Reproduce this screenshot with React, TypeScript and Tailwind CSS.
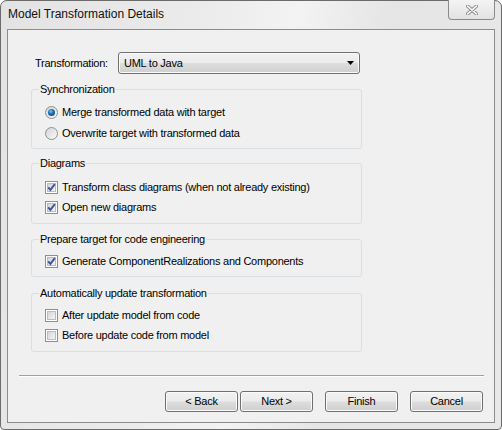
const btn =
  "flex h-[21px] w-[73px] items-center justify-center rounded-[3px] border border-[#707070] bg-[linear-gradient(#f2f2f2_0%,#ebebeb_48%,#dddddd_52%,#cfcfcf_100%)] shadow-[inset_0_0_0_1px_#fbfbfb]";

const Radio = ({ checked, label, rowClass }: { checked?: boolean; label: string; rowClass: string }) => (
  <div className={`flex items-center ${rowClass}`}>
    <span className="flex h-[13px] w-[13px] items-center justify-center rounded-full border border-[#8e8f8f] bg-[linear-gradient(135deg,#d4d4d4,#f9f9f9)]">
      {checked && (
        <span className="h-[7px] w-[7px] rounded-full bg-[radial-gradient(circle_at_40%_35%,#7cc8f5_0%,#1c6fb8_40%,#0b3577_100%)]" />
      )}
    </span>
    <span className="ml-[4px]">{label}</span>
  </div>
);

const Check = ({ checked, label }: { checked?: boolean; label: string }) => (
  <div className="flex h-[20px] items-center">
    <svg width="13" height="13" viewBox="0 0 13 13">
      <defs>
        <linearGradient id="cbfill" x1="0" y1="0" x2="1" y2="1">
          <stop offset="0" stopColor="#cfd2d6" />
          <stop offset="1" stopColor="#f7f7f7" />
        </linearGradient>
      </defs>
      <rect x="0.5" y="0.5" width="12" height="12" fill="#ffffff" stroke="#8e8f8f" />
      <rect x="2.5" y="2.5" width="8" height="8" fill="url(#cbfill)" stroke="#b9bcc0" />
      {checked && (
        <path d="M3.2 6.4 L5.4 8.9 L9.8 3.2" fill="none" stroke="#40559a" strokeWidth="1.9" />
      )}
    </svg>
    <span className="ml-[4px]">{label}</span>
  </div>
);

const Group = ({ title, className, children }: { title: string; className: string; children: React.ReactNode }) => (
  <fieldset className={`w-[331px] rounded-[3px] border border-[#d5dfe5] pl-[7px] ${className}`}>
    <legend className="px-[1px] leading-[13px]">{title}</legend>
    <div className="pl-[6px]">{children}</div>
  </fieldset>
);

export default function App() {
  return (
    <div className="flex h-[430px] w-[502px] flex-col rounded-t-[7px] rounded-b-[4px] border border-[#6b6b6b] bg-[linear-gradient(100deg,#e3e3e3_0%,#ebebeb_35%,#f3f3f3_52%,#e5e5e5_68%,#e8e8e8_100%)] px-[6px] pb-[6px] font-['Liberation_Sans',Arial,sans-serif] text-[11px] tracking-[-0.25px] text-black">
      <div className="flex h-[28px] items-start justify-between">
        <span className="mt-[6px] pl-px text-[12px] leading-[14px] tracking-normal text-[#111]">Model Transformation Details</span>
        <div className="-mt-px flex h-[20px] w-[47px] items-center justify-center rounded-b-[4px] border border-t-0 border-[#8a8a8a] bg-[linear-gradient(#f4f4f4,#e2e2e2)]">
          <svg width="12" height="10" viewBox="0 0 12 10">
            <path d="M1.5 1 L10.5 9 M10.5 1 L1.5 9" stroke="#8a8a8a" strokeWidth="3.4" strokeLinecap="round" />
            <path d="M1.5 1 L10.5 9 M10.5 1 L1.5 9" stroke="#ffffff" strokeWidth="1.6" strokeLinecap="round" />
          </svg>
        </div>
      </div>

      <div className="flex flex-1 flex-col border border-[#8c8c8c] bg-[#f0f0f0]">
        <div className="flex items-center pl-[27px] pt-[22px]">
          <span className="w-[83px]">Transformation:</span>
          <div className="flex h-[22px] w-[242px] items-center justify-between rounded-[3px] border border-[#707070] bg-[linear-gradient(#f2f2f2_0%,#ebebeb_48%,#dddddd_52%,#cfcfcf_100%)] pl-[5px] pr-[5px] shadow-[inset_0_0_0_1px_#fbfbfb]">
            <span>UML to Java</span>
            <svg width="7" height="4" viewBox="0 0 7 4">
              <path d="M0 0 H7 L3.5 4 Z" fill="#000" />
            </svg>
          </div>
        </div>

        <div className="pl-[23px]">
          <Group title="Synchronization" className="mt-[9px] pb-[4px] pt-[6px]">
            <Radio checked label="Merge transformed data with target" rowClass="h-[21px]" />
            <Radio label="Overwrite target with transformed data" rowClass="h-[21px]" />
          </Group>
          <Group title="Diagrams" className="mt-[8px] pb-[6px] pt-[7px]">
            <Check checked label="Transform class diagrams (when not already existing)" />
            <Check checked label="Open new diagrams" />
          </Group>
          <Group title="Prepare target for code engineering" className="mt-[9px] pb-[5px] pt-[5px]">
            <Check checked label="Generate ComponentRealizations and Components" />
          </Group>
          <Group title="Automatically update transformation" className="mt-[10px] pb-[6px] pt-[5px]">
            <Check label="After update model from code" />
            <Check label="Before update code from model" />
          </Group>
        </div>

        <div className="mt-auto">
          <div className="ml-[11px] mr-[10px] border-t border-b border-t-[#a0a0a0] border-b-white" />
          <div className="flex justify-end pb-[10px] pr-[11px] pt-[14px]">
            <div className="flex gap-[2px]">
              <button className={btn}>&lt; Back</button>
              <button className={btn}>Next &gt;</button>
            </div>
            <button className={`${btn} ml-[12px]`}>Finish</button>
            <button className={`${btn} ml-[12px]`}>Cancel</button>
          </div>
        </div>
      </div>
    </div>
  );
}
